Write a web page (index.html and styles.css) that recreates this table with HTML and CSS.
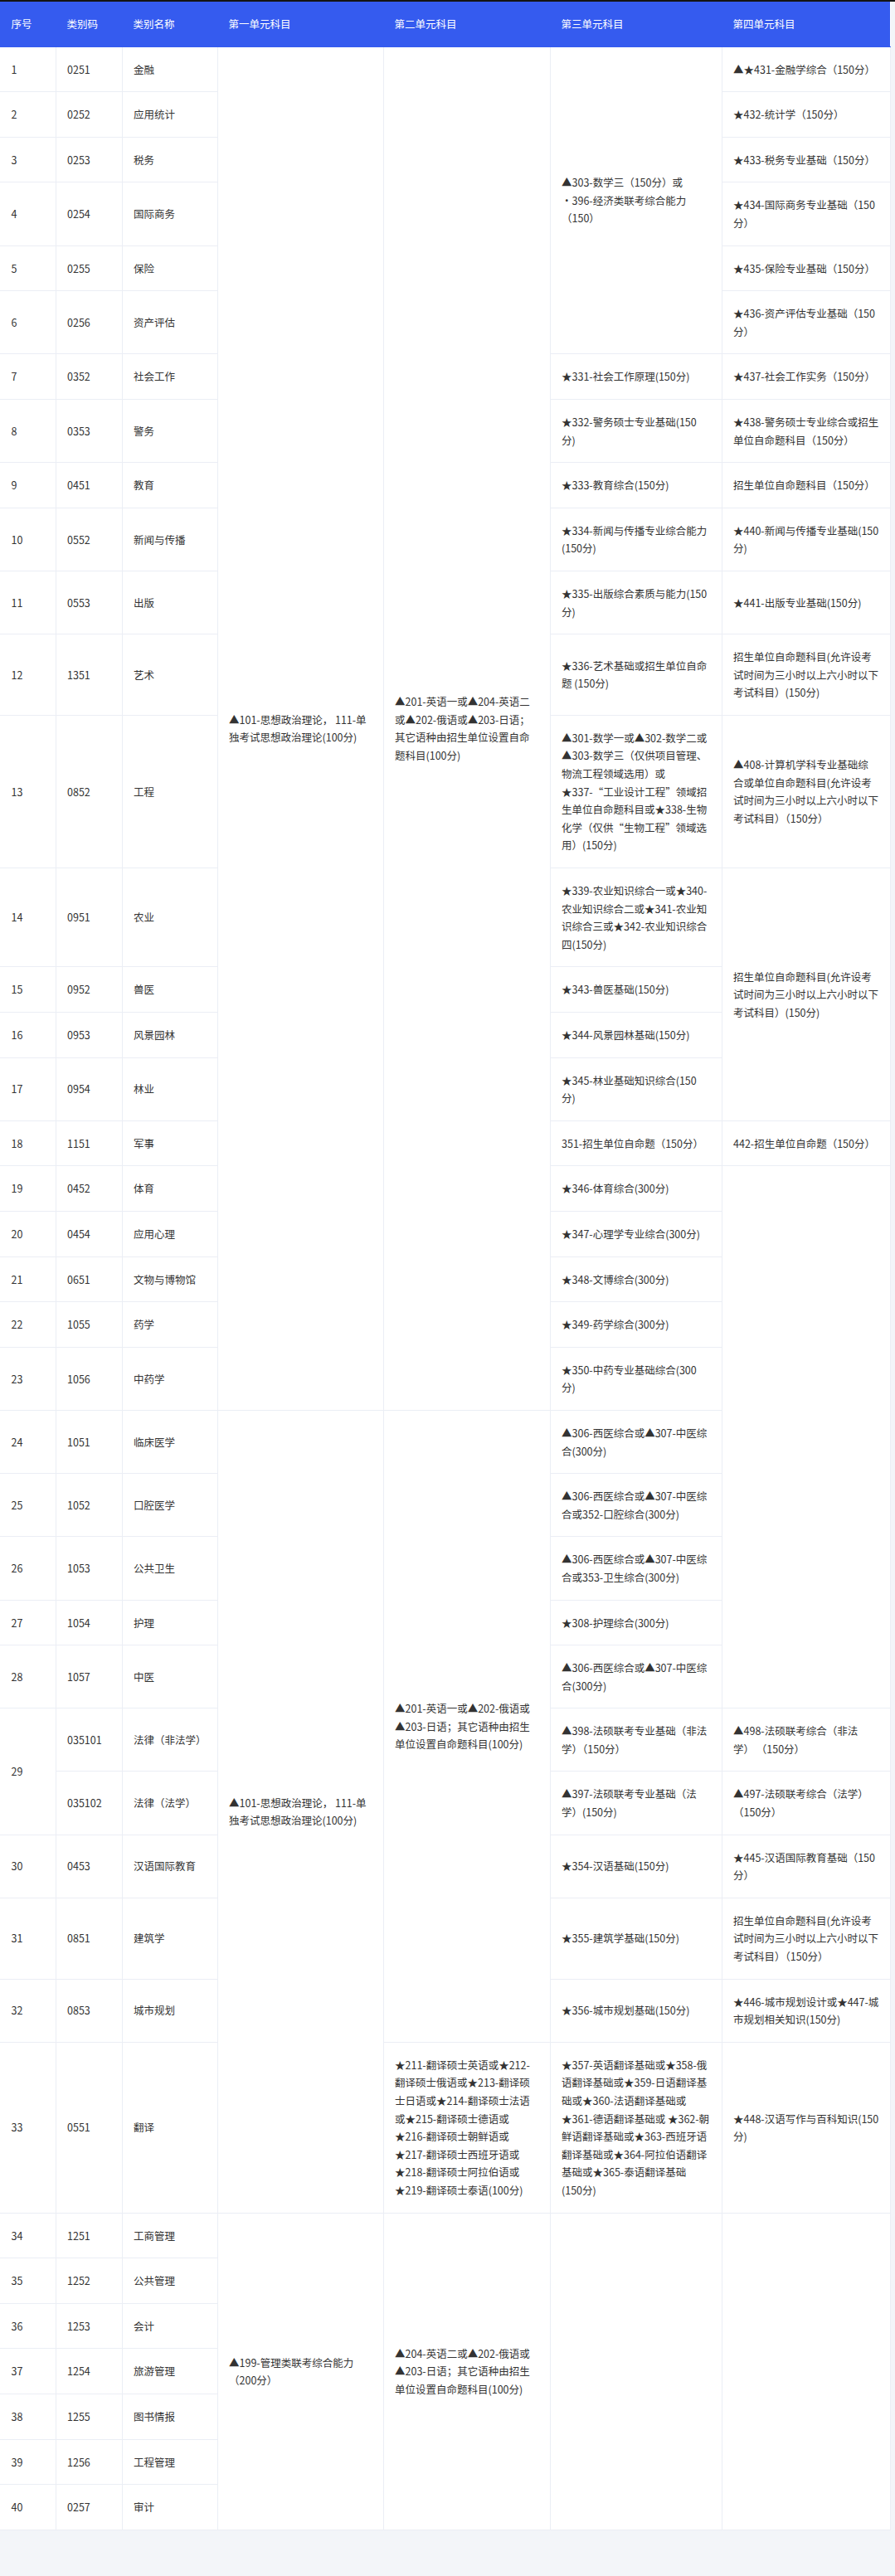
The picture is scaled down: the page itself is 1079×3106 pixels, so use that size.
FILE: index.html
```html
<!DOCTYPE html>
<html lang="zh-CN">
<head>
<meta charset="utf-8">
<title>专业学位类别考试科目</title>
<link rel="stylesheet" href="styles.css">
</head>
<body>
<div class="page">
<table class="grid">
<colgroup>
<col class="w-no"><col class="w-code"><col class="w-name"><col class="w-u1"><col class="w-u2"><col class="w-u3"><col class="w-u4">
</colgroup>
<thead>
<tr><th>序号</th><th>类别码</th><th>类别名称</th><th>第一单元科目</th><th>第二单元科目</th><th>第三单元科目</th><th>第四单元科目</th></tr>
</thead>
<tbody>
<tr><td>1</td><td>0251</td><td>金融</td><td rowspan="23">▲101-思想政治理论， 111-单<br>独考试思想政治理论(100分)</td><td rowspan="23">▲201-英语一或▲204-英语二<br>或▲202-俄语或▲203-日语；<br>其它语种由招生单位设置自命<br>题科目(100分)</td><td rowspan="6">▲303-数学三（150分）或<br>•396-经济类联考综合能力<br>（150）</td><td>▲★431-金融学综合（150分）</td></tr>
<tr><td>2</td><td>0252</td><td>应用统计</td><td>★432-统计学（150分）</td></tr>
<tr><td>3</td><td>0253</td><td>税务</td><td>★433-税务专业基础（150分）</td></tr>
<tr><td>4</td><td>0254</td><td>国际商务</td><td>★434-国际商务专业基础（150<br>分）</td></tr>
<tr><td>5</td><td>0255</td><td>保险</td><td>★435-保险专业基础（150分）</td></tr>
<tr><td>6</td><td>0256</td><td>资产评估</td><td>★436-资产评估专业基础（150<br>分）</td></tr>
<tr><td>7</td><td>0352</td><td>社会工作</td><td>★331-社会工作原理(150分)</td><td>★437-社会工作实务（150分）</td></tr>
<tr><td>8</td><td>0353</td><td>警务</td><td>★332-警务硕士专业基础(150<br>分)</td><td>★438-警务硕士专业综合或招生<br>单位自命题科目（150分）</td></tr>
<tr><td>9</td><td>0451</td><td>教育</td><td>★333-教育综合(150分)</td><td>招生单位自命题科目（150分）</td></tr>
<tr><td>10</td><td>0552</td><td>新闻与传播</td><td>★334-新闻与传播专业综合能力<br>(150分)</td><td>★440-新闻与传播专业基础(150<br>分)</td></tr>
<tr><td>11</td><td>0553</td><td>出版</td><td>★335-出版综合素质与能力(150<br>分)</td><td>★441-出版专业基础(150分)</td></tr>
<tr><td>12</td><td>1351</td><td>艺术</td><td>★336-艺术基础或招生单位自命<br>题 (150分)</td><td>招生单位自命题科目(允许设考<br>试时间为三小时以上六小时以下<br>考试科目）(150分)</td></tr>
<tr><td>13</td><td>0852</td><td>工程</td><td>▲301-数学一或▲302-数学二或<br>▲303-数学三（仅供项目管理、<br>物流工程领域选用）或<br>★337-“工业设计工程”领域招<br>生单位自命题科目或★338-生物<br>化学（仅供“生物工程”领域选<br>用）(150分)</td><td>▲408-计算机学科专业基础综<br>合或单位自命题科目(允许设考<br>试时间为三小时以上六小时以下<br>考试科目）（150分）</td></tr>
<tr><td>14</td><td>0951</td><td>农业</td><td>★339-农业知识综合一或★340-<br>农业知识综合二或★341-农业知<br>识综合三或★342-农业知识综合<br>四(150分)</td><td rowspan="4">招生单位自命题科目(允许设考<br>试时间为三小时以上六小时以下<br>考试科目）(150分)</td></tr>
<tr><td>15</td><td>0952</td><td>兽医</td><td>★343-兽医基础(150分)</td></tr>
<tr><td>16</td><td>0953</td><td>风景园林</td><td>★344-风景园林基础(150分)</td></tr>
<tr><td>17</td><td>0954</td><td>林业</td><td>★345-林业基础知识综合(150<br>分)</td></tr>
<tr><td>18</td><td>1151</td><td>军事</td><td>351-招生单位自命题（150分）</td><td>442-招生单位自命题（150分）</td></tr>
<tr><td>19</td><td>0452</td><td>体育</td><td>★346-体育综合(300分)</td><td rowspan="10"></td></tr>
<tr><td>20</td><td>0454</td><td>应用心理</td><td>★347-心理学专业综合(300分)</td></tr>
<tr><td>21</td><td>0651</td><td>文物与博物馆</td><td>★348-文博综合(300分)</td></tr>
<tr><td>22</td><td>1055</td><td>药学</td><td>★349-药学综合(300分)</td></tr>
<tr><td>23</td><td>1056</td><td>中药学</td><td>★350-中药专业基础综合(300<br>分)</td></tr>
<tr><td>24</td><td>1051</td><td>临床医学</td><td rowspan="11">▲101-思想政治理论， 111-单<br>独考试思想政治理论(100分)</td><td rowspan="10">▲201-英语一或▲202-俄语或<br>▲203-日语；其它语种由招生<br>单位设置自命题科目(100分)</td><td>▲306-西医综合或▲307-中医综<br>合(300分)</td></tr>
<tr><td>25</td><td>1052</td><td>口腔医学</td><td>▲306-西医综合或▲307-中医综<br>合或352-口腔综合(300分)</td></tr>
<tr><td>26</td><td>1053</td><td>公共卫生</td><td>▲306-西医综合或▲307-中医综<br>合或353-卫生综合(300分)</td></tr>
<tr><td>27</td><td>1054</td><td>护理</td><td>★308-护理综合(300分)</td></tr>
<tr><td>28</td><td>1057</td><td>中医</td><td>▲306-西医综合或▲307-中医综<br>合(300分)</td></tr>
<tr><td rowspan="2">29</td><td>035101</td><td>法律（非法学）</td><td>▲398-法硕联考专业基础（非法<br>学）（150分）</td><td>▲498-法硕联考综合（非法<br>学） （150分）</td></tr>
<tr><td>035102</td><td>法律（法学）</td><td>▲397-法硕联考专业基础（法<br>学）(150分)</td><td>▲497-法硕联考综合（法学）<br>（150分）</td></tr>
<tr><td>30</td><td>0453</td><td>汉语国际教育</td><td>★354-汉语基础(150分)</td><td>★445-汉语国际教育基础（150<br>分）</td></tr>
<tr><td>31</td><td>0851</td><td>建筑学</td><td>★355-建筑学基础(150分)</td><td>招生单位自命题科目(允许设考<br>试时间为三小时以上六小时以下<br>考试科目）（150分）</td></tr>
<tr><td>32</td><td>0853</td><td>城市规划</td><td>★356-城市规划基础(150分)</td><td>★446-城市规划设计或★447-城<br>市规划相关知识(150分)</td></tr>
<tr><td>33</td><td>0551</td><td>翻译</td><td>★211-翻译硕士英语或★212-<br>翻译硕士俄语或★213-翻译硕<br>士日语或★214-翻译硕士法语<br>或★215-翻译硕士德语或<br>★216-翻译硕士朝鲜语或<br>★217-翻译硕士西班牙语或<br>★218-翻译硕士阿拉伯语或<br>★219-翻译硕士泰语(100分)</td><td>★357-英语翻译基础或★358-俄<br>语翻译基础或★359-日语翻译基<br>础或★360-法语翻译基础或<br>★361-德语翻译基础或 ★362-朝<br>鲜语翻译基础或★363-西班牙语<br>翻译基础或★364-阿拉伯语翻译<br>基础或★365-泰语翻译基础<br>(150分)</td><td>★448-汉语写作与百科知识(150<br>分)</td></tr>
<tr><td>34</td><td>1251</td><td>工商管理</td><td rowspan="7">▲199-管理类联考综合能力<br>（200分）</td><td rowspan="7">▲204-英语二或▲202-俄语或<br>▲203-日语；其它语种由招生<br>单位设置自命题科目(100分)</td><td rowspan="7"></td><td rowspan="7"></td></tr>
<tr><td>35</td><td>1252</td><td>公共管理</td></tr>
<tr><td>36</td><td>1253</td><td>会计</td></tr>
<tr><td>37</td><td>1254</td><td>旅游管理</td></tr>
<tr><td>38</td><td>1255</td><td>图书情报</td></tr>
<tr><td>39</td><td>1256</td><td>工程管理</td></tr>
<tr><td>40</td><td>0257</td><td>审计</td></tr>
</tbody>
</table>
</div>
</body>
</html>
```

FILE: styles.css
```css
html, body {
  margin: 0;
  padding: 0;
}

body {
  background: #f3f5f9;
  font-family: "Microsoft YaHei", "Noto Sans CJK SC", "Noto Sans", sans-serif;
  font-size: 12.5px;
  color: #333333;
}

.page {
  border-top: 2px solid #141414;
  min-height: 3104px;
}

.grid {
  width: 1073px;
  border-collapse: collapse;
  table-layout: fixed;
  background: #ffffff;
}

.w-no { width: 67px; }
.w-code { width: 80px; }
.w-name { width: 115px; }
.w-u1 { width: 200px; }
.w-u2 { width: 201px; }
.w-u3 { width: 207px; }
.w-u4 { width: 203px; }

.grid th,
.grid td {
  padding: 16px 12px 16px 13.5px;
  line-height: 21.6px;
  text-align: left;
  vertical-align: middle;
  white-space: nowrap;
}

.grid th {
  background: #355bef;
  color: #ffffff;
  font-weight: normal;
  border-bottom: 1px solid #355bef;
}

.grid td {
  border-right: 1px solid #ebeef5;
  border-bottom: 1px solid #ebeef5;
}
```
